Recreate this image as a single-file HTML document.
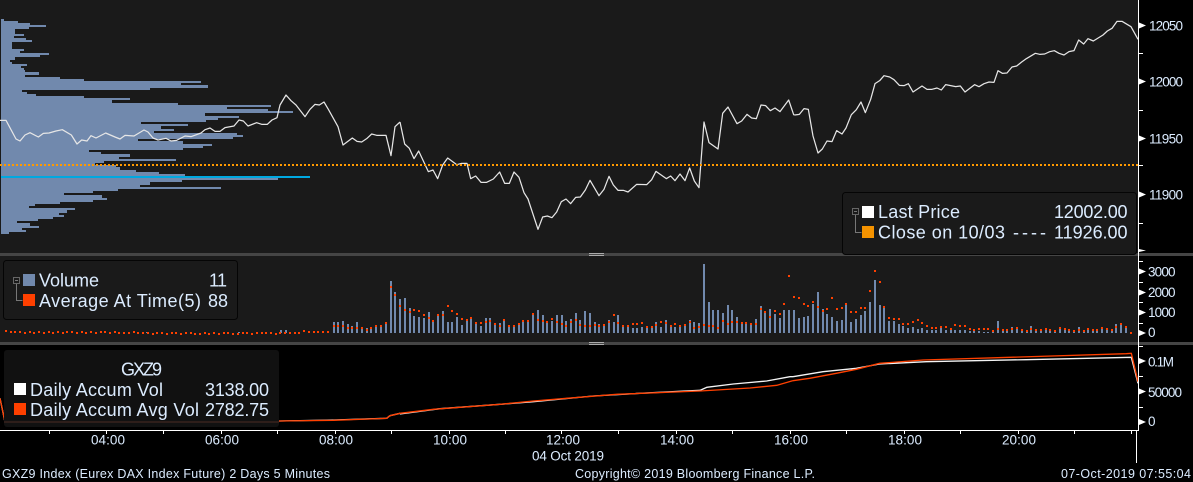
<!DOCTYPE html>
<html><head><meta charset="utf-8"><style>
html,body{margin:0;padding:0;background:#000;width:1193px;height:482px;overflow:hidden}
svg{display:block}
text{font-family:"Liberation Sans",sans-serif;fill:#dcecff;white-space:pre}
.l{font-size:18px}.a{font-size:13.5px}.f{font-size:12.5px}
</style></head><body>
<svg width="1193" height="482" viewBox="0 0 1193 482" xmlns="http://www.w3.org/2000/svg">
<rect width="1193" height="482" fill="#000"/>
<rect x="0" y="0" width="1138" height="253" fill="#1a1a1a"/>
<rect x="0" y="256" width="1138" height="86" fill="#1a1a1a"/>
<rect x="0" y="253" width="1193" height="3" fill="#454545"/>
<rect x="0" y="342" width="1193" height="3" fill="#454545"/>
<path d="M589 253.5h15M589 255.5h15M589 342.5h15M589 344.5h15" stroke="#aaa" stroke-width="1"/>

<g transform="scale(0.333333)">
<path shape-rendering="crispEdges" fill="#7189ad" d="M3 57H12V63H54V69H90V75H138V81H87V87H45V102H72V108H42V114H78V120H96V126H36V147H72V153H60V159H147V165H120V171H45V180H30V186H36V192H81V198H63V204H72V210H75V216H117V225H75V231H180V237H252V243H603V249H543V255H624V264H450V270H66V276H81V282H108V288H252V294H390V300H336V309H534V315H813V321H681V327H804V333H879V339H615V348H717V354H654V360H618V366H423V372H564V378H483V387H522V393H462V399H711V405H729V411H699V417H414V423H549V432H636V438H609V444H549V450H267V456H303V462H390V471H357V477H528V483H312V489H285V495H348V501H360V510H408V516H477V522H555V528H930V534H834V540H546V546H450V555H420V561H663V567H354V573H279V579H192V585H306V594H321V600H279V606H180V612H105V618H87V624H225V630H201V639H177V645H192V651H159V657H114V663H51V669H90V678H117V684H66V690H78V696H27V702H3Z"/>
<g fill="none" stroke="#e6e6e6" stroke-width="3.7" stroke-linejoin="round">
<polyline points="0,361 18,361 48,417 60,423 75,405 90,398 115,411 130,400 147,399 168,393 187,389 214,405 231,432 245,420 261,423 273,407 288,414 317,399 345,411 360,417 375,406 402,408 432,390 444,396 459,414 474,420 498,415 513,423 530,421 555,408 573,410 603,399 615,389 630,384 645,394 660,394 675,383 702,378 717,360 730,363 744,378 770,368 785,373 802,373 816,360 831,353 840,315 858,285 873,302 888,315 915,350 930,328 945,313 958,315 972,306 985,328 1014,380 1029,435 1057,414 1071,424 1085,426 1100,416 1115,402 1130,406 1158,406 1173,467 1185,380 1200,366"/>
<polyline transform="translate(1200 0)" points="0,366 14,432 28,445 42,476 56,453 85,515 99,510 113,536 128,495 143,474 170,494 185,490 201,490 212,536 227,528 243,547 260,547 280,537 299,516 314,550 328,550 342,516 357,532 372,578 384,597 414,688 428,651 442,648 456,653 470,636 484,605 498,597 512,611 527,592 541,591 556,570 570,541 597,587 612,568 627,529 640,555 654,571 670,571 684,576 710,553 740,554 755,539 768,514 799,536 812,528 825,542 840,522 855,542 869,504 883,543 897,563 912,366 927,428 954,447 968,340 984,321 1011,371 1025,363 1041,343 1055,354 1069,356 1083,315 1097,317 1111,332 1125,324 1140,335 1166,300 1181,344 1184,345"/>
<polyline transform="translate(2379 0)" points="5,345 19,343 33,326 46,328 60,408 75,459 88,447 102,423 117,425 131,392 147,402 159,384 175,344 190,329 204,306 217,338 233,298 246,251 260,242 273,227 290,231 303,239 319,256 333,257 346,251 360,276 387,258 402,268 417,268 432,264 445,270 458,254 473,257 488,260 502,258 516,276 545,254 558,260 573,251 588,246 603,247 615,212 628,220 642,219 657,201 671,198 686,186 700,176 727,160 740,163 755,162 770,155 784,152 798,160 813,165 828,155 843,152 857,120 872,132 885,116 901,123 930,105 943,93 957,85 972,64 987,64 1014,80 1035,118"/>
</g>
</g>
<path d="M0 165H1138" stroke="#ff9a00" stroke-width="2" stroke-dasharray="2 2" fill="none"/>
<rect x="1" y="176" width="309" height="2" fill="#00a8e0"/>

<!-- price legend -->
<rect x="842.5" y="192.5" width="294" height="62" rx="3" fill="#1a1a1a" stroke="#050505"/>
<rect x="862" y="206" width="12" height="12" fill="#fff"/>
<rect x="862" y="226" width="12" height="12" fill="#f59300"/>
<rect x="852.5" y="208.5" width="6" height="6" fill="none" stroke="#666"/>
<path d="M854 211.5h3M855.5 215v17.500h6" fill="none" stroke="#777"/>
<text class="l" x="878" y="218" textLength="82">Last Price</text>
<text class="l" x="878" y="238.500" textLength="127">Close on 10/03</text>
<text class="l" x="1013" y="238.500" textLength="33">----</text>
<text class="l" x="1054" y="218" textLength="73.500">12002.00</text>
<text class="l" x="1054" y="238.500" textLength="73.500">11926.00</text>

<!-- volume -->
<g transform="scale(0.333333)" shape-rendering="crispEdges" fill="none">
<g transform="translate(0 750)" stroke="#7189ad" stroke-width="6">
<path d="M843 249V240M858 249V240M441 249V246M717 249V246M1002 249V216M1014 249V216M1029 249V213M1044 249V222M1056 249V228M1071 249V216M1086 249V234M1101 249V234M1113 249V231M1128 249V228M1143 249V228M1158 249V219M1173 249V93M1185 249V126M1200 249V147"/>
</g>
<g transform="translate(1200 750)" stroke="#7189ad" stroke-width="6">
<path d="M15 249V144M30 249V174M42 249V198M57 249V201M72 249V204M87 249V186M99 249V210M114 249V195M129 249V183M144 249V216M156 249V216M171 249V201M186 249V225M201 249V210M213 249V204M228 249V219M243 249V228M258 249V204M270 249V204M285 249V225M300 249V219M312 249V213M327 249V231M342 249V231M357 249V222M369 249V210M384 249V210M399 249V195M414 249V180M429 249V195M441 249V213M456 249V213M471 249V195M486 249V195M498 249V213M513 249V207M528 249V189M540 249V210M555 249V183M570 249V189M585 249V216M597 249V222M612 249V222M627 249V210M642 249V216M654 249V195M669 249V225M684 249V225M699 249V234M711 249V234M726 249V231M741 249V234M756 249V231M768 249V216M783 249V231M798 249V210M813 249V225M825 249V231M840 249V228M855 249V225M870 249V210M882 249V216M897 249V219M912 249V42M927 249V156M939 249V180M954 249V180M969 249V189M984 249V165M996 249V180M1011 249V201M1026 249V216M1038 249V222M1053 249V219M1068 249V207M1083 249V168M1095 249V183M1110 249V177M1125 249V192M1140 249V204M1152 249V180M1167 249V180"/>
</g>
<g transform="translate(2379 750)" stroke="#7189ad" stroke-width="6">
<path d="M3 249V180M18 249V204M33 249V201M45 249V198M60 249V162M75 249V126M90 249V177M102 249V192M117 249V201M132 249V213M147 249V210M159 249V165M174 249V216M189 249V207M204 249V195M216 249V183M231 249V156M246 249V90M261 249V165M273 249V171M288 249V213M303 249V213M318 249V222M330 249V228M345 249V234M360 249V231M375 249V237M387 249V234M402 249V240M417 249V240M429 249V240M444 249V234M459 249V240M474 249V240M486 249V240M501 249V240M516 249V240M531 249V243M543 249V243M558 249V243M573 249V246M585 249V246M600 249V240M615 249V213M630 249V237M642 249V240M657 249V231M672 249V237M687 249V240M702 249V240M714 249V228M729 249V240M744 249V240M759 249V237M771 249V240M786 249V243M801 249V234M816 249V237M828 249V240M843 249V240M858 249V231M873 249V240M885 249V237M900 249V243M912 249V237M927 249V231M942 249V234M957 249V240M969 249V222M984 249V225M999 249V234M1014 249V246"/>
</g>
<g transform="translate(-3 750)" stroke="#ff4000" stroke-width="6">
<path d="M18 243h6M33 246h6M45 246h6M60 246h6M75 249h6M90 246h6M102 249h6M117 246h6M132 249h6M147 246h6M159 249h6M174 246h6M189 249h6M201 246h6M216 246h6M231 249h6M246 246h6M258 249h6M273 246h6M288 249h6M303 246h6M315 246h6M330 249h6M345 246h6M357 249h6M372 249h6M387 249h6M402 246h6M414 249h6M429 249h6M444 249h6M459 252h6M471 249h6M486 249h6M501 252h6M516 249h6M528 249h6M543 252h6M558 249h6M573 249h6M585 252h6M600 252h6M615 249h6M627 252h6M642 249h6M657 252h6M672 249h6M684 249h6M699 252h6M714 252h6M729 249h6M741 249h6M756 252h6M771 249h6M786 249h6M798 249h6M813 249h6M828 252h6M840 249h6M855 249h6M870 249h6M885 249h6M897 249h6M912 243h6M927 246h6M942 246h6M954 246h6M969 246h6M984 246h6M1002 228h6M1014 228h6M1029 228h6M1044 234h6M1056 234h6M1071 234h6M1086 234h6M1101 240h6M1113 234h6M1128 228h6M1143 228h6M1158 219h6M1173 111h6M1185 135h6M1200 168h6"/>
</g>
<g transform="translate(1197 750)" stroke="#ff4000" stroke-width="6">
<path d="M15 180h6M30 186h6M42 180h6M57 183h6M72 195h6M87 204h6M99 213h6M114 195h6M129 195h6M144 168h6M156 183h6M171 192h6M186 207h6M201 210h6M213 204h6M228 219h6M243 219h6M258 216h6M270 213h6M285 222h6M300 228h6M312 210h6M327 228h6M342 228h6M357 222h6M369 213h6M384 213h6M399 192h6M414 210h6M429 213h6M441 216h6M456 207h6M471 216h6M486 222h6M498 228h6M513 216h6M528 210h6M540 225h6M555 228h6M570 228h6M585 225h6M597 228h6M612 225h6M627 216h6M642 195h6M654 219h6M669 228h6M684 228h6M699 222h6M711 222h6M726 219h6M741 231h6M756 231h6M768 225h6M783 216h6M798 219h6M813 228h6M825 222h6M840 228h6M855 225h6M870 216h6M882 234h6M897 231h6M912 225h6M927 228h6M939 228h6M954 234h6M969 213h6M984 222h6M996 216h6M1011 216h6M1026 219h6M1038 219h6M1053 222h6M1068 222h6M1083 177h6M1095 186h6M1110 201h6M1125 183h6M1140 192h6M1152 162h6M1167 78h6"/>
</g>
<g transform="translate(2376 750)" stroke="#ff4000" stroke-width="6">
<path d="M3 141h6M18 144h6M33 162h6M45 168h6M60 156h6M75 171h6M90 183h6M102 177h6M117 144h6M132 177h6M147 174h6M159 162h6M174 186h6M189 186h6M204 174h6M216 174h6M231 123h6M246 63h6M261 96h6M273 171h6M288 204h6M303 207h6M318 207h6M330 222h6M345 222h6M360 216h6M375 210h6M387 219h6M402 228h6M417 234h6M429 234h6M444 231h6M459 231h6M474 237h6M486 225h6M501 228h6M516 228h6M531 237h6M543 240h6M558 237h6M573 237h6M585 237h6M600 243h6M615 237h6M630 240h6M642 240h6M657 237h6M672 234h6M687 240h6M702 243h6M714 237h6M729 240h6M744 240h6M759 237h6M771 240h6M786 243h6M801 234h6M816 237h6M828 240h6M843 243h6M858 240h6M873 243h6M885 237h6M900 240h6M912 240h6M927 234h6M942 237h6M957 240h6M969 231h6M984 222h6M999 231h6M1014 249h6"/>
</g>
</g>
<rect x="3.500" y="260.500" width="234" height="59" rx="3" fill="#1a1a1a" stroke="#050505"/>
<rect x="23" y="274" width="12" height="12" fill="#7189ad"/>
<rect x="23" y="294" width="12" height="12" fill="#ff4000"/>
<rect x="13.500" y="277.500" width="6" height="6" fill="none" stroke="#666"/>
<path d="M15 280.500h3M16.500 284v16.500h6" fill="none" stroke="#777"/>
<text class="l" x="39" y="286.500" textLength="60">Volume</text>
<text class="l" x="39" y="307" textLength="162">Average At Time(5)</text>
<text class="l" x="209" y="286.500" textLength="18">11</text>
<text class="l" x="208" y="307" textLength="20">88</text>

<!-- accum lines -->
<g transform="scale(0.333333)" fill="none" stroke-linejoin="round" stroke-width="4">
<g stroke="#f4f4f4">
<polyline transform="translate(0 750)" points="0,445 15,516 840,513 1000,510 1160,505 1170,497 1200,490"/>
<polyline transform="translate(1200 750)" points="0,492 120,476 300,463 400,455 580,438 700,431 900,421 920,412 1000,402 1100,393 1170,380 1179,380"/>
<polyline transform="translate(2379 750)" points="0,380 90,365 190,355 260,342 400,335 700,329 1015,322 1035,400"/>
</g>
<g stroke="#ff4000">
<polyline transform="translate(0 750)" points="0,445 15,516 840,513 1000,511 1160,505 1170,497 1200,490"/>
<polyline transform="translate(1200 750)" points="0,490 100,478 300,463 400,453 500,445 650,433 900,423 1050,414 1130,406 1179,392"/>
<polyline transform="translate(2379 750)" points="0,392 50,385 130,370 190,358 260,340 390,330 650,322 1000,311 1015,310 1035,395"/>
</g>
</g>
<rect x="4" y="350" width="275" height="77" rx="3" fill="#111" />
<path d="M4 422H279" stroke="#7a4030" stroke-width="1" opacity=".55"/>
<rect x="14" y="383" width="12" height="12" fill="#fff"/>
<rect x="14" y="403" width="12" height="12" fill="#ff4000"/>
<text class="l" x="121" y="375.500" textLength="41">GXZ9</text>
<text class="l" x="30" y="396" textLength="133">Daily Accum Vol</text>
<text class="l" x="30" y="416" textLength="169">Daily Accum Avg Vol</text>
<text class="l" x="205" y="396" textLength="64">3138.00</text>
<text class="l" x="205" y="416" textLength="64">2782.75</text>

<!-- axes -->
<path d="M1138.500 0V430.500H0M1136.500 431V463" stroke="#fff" stroke-width="1" fill="none"/>
<path d="M1139 53.500h4M1139 110.500h4M1139 165.500h4M1139 223.500h4M1139 261.500h4M1139 282.500h4M1139 302.500h4M1139 323.500h4M1139 346.500h4M1139 376.500h4M1139 407.500h4" stroke="#fff" fill="none"/>
<path d="M49.500 431v3M106.500 431v3M163.500 431v3M221.500 431v3M277.500 431v3M335.500 431v3M391.500 431v3M449.500 431v3M505.500 431v3M561.500 431v3M618.500 431v3M676.500 431v3M732.500 431v3M790.500 431v3M846.500 431v3M904.500 431v3M960.500 431v3M1018.500 431v3M1074.500 431v3M1131.500 431v3" stroke="#fff" fill="none"/>
<path fill="#fff" d="M1139 22.500L1146 25.500L1139 28.500ZM1139 78.500L1146 81.500L1139 84.500ZM1139 135.500L1146 138.500L1139 141.500ZM1139 191.500L1146 194.500L1139 197.500ZM1139 249L1146 250.500L1139 252ZM1139 268.500L1146 271.500L1139 274.500ZM1139 289.500L1146 292.500L1139 295.500ZM1139 309.500L1146 312.500L1139 315.500ZM1139 330L1146 333L1139 336ZM1139 358L1146 361L1139 364ZM1139 388.500L1146 391.500L1139 394.500ZM1139 419L1146 422L1139 425Z"/>
<g class="a">
<text class="a" x="1149" y="30.500" textLength="34">12050</text>
<text class="a" x="1149" y="86.500" textLength="34">12000</text>
<text class="a" x="1149" y="143.500" textLength="34">11950</text>
<text class="a" x="1149" y="199.500" textLength="34">11900</text>
<text class="a" x="1148" y="276.500" textLength="27.500">3000</text>
<text class="a" x="1148" y="297" textLength="27.500">2000</text>
<text class="a" x="1148" y="317" textLength="27.500">1000</text>
<text class="a" x="1148" y="337">0</text>
<text class="a" x="1148" y="366.500" textLength="26">0.1M</text>
<text class="a" x="1148" y="397" textLength="34">50000</text>
<text class="a" x="1148" y="426">0</text>
<text class="a" x="91" y="444.500" textLength="34">04:00</text>
<text class="a" x="205" y="444.500" textLength="34">06:00</text>
<text class="a" x="319" y="444.500" textLength="34">08:00</text>
<text class="a" x="433" y="444.500" textLength="34">10:00</text>
<text class="a" x="546" y="444.500" textLength="34">12:00</text>
<text class="a" x="660" y="444.500" textLength="34">14:00</text>
<text class="a" x="774" y="444.500" textLength="34">16:00</text>
<text class="a" x="888" y="444.500" textLength="34">18:00</text>
<text class="a" x="1002" y="444.500" textLength="34">20:00</text>
<text class="a" x="532" y="460.500" textLength="72">04 Oct 2019</text>
</g>
<text class="f" x="2" y="478" textLength="328">GXZ9 Index (Eurex DAX Index Future) 2 Days 5 Minutes</text>
<text class="f" x="575" y="478" textLength="240">Copyright© 2019 Bloomberg Finance L.P.</text>
<text class="f" x="1061" y="478" textLength="130">07-Oct-2019 07:55:04</text>
</svg>
</body></html>
